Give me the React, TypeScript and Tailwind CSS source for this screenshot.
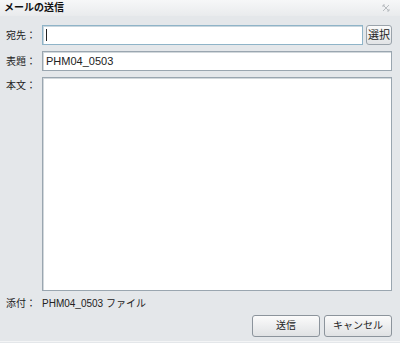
export default function App() {
    const jp = "font-['Tahoma','Liberation_Sans','Noto_Sans_CJK_JP',sans-serif]";
    return (
        <div className={`flex h-[343px] w-[400px] flex-col bg-[#e4e7ea] text-[10px] text-[#222] ${jp}`}>
            {/* title bar */}
            <div className="flex h-[16px] shrink-0 items-center justify-between bg-gradient-to-b from-[#f6f7f8] to-[#e9ebed] pl-[4px] pr-[10px]">
                <span className="text-[10px] font-bold leading-none text-[#111]">メールの送信</span>
                <svg width="8" height="8" viewBox="0 0 8 8" className="text-[#b8bcc0]">
                    <path d="M1 1 L7 7 M7 1 L1 7 M1 1 h2 M1 1 v2 M7 7 h-2 M7 7 v-2" stroke="currentColor" strokeWidth="1" fill="none" />
                </svg>
            </div>

            <div className="flex flex-1 flex-col pl-[6px] pr-[8px] pt-[9px]">
                <div className="flex h-[20px] shrink-0 items-center">
                    <span className="w-[36px] shrink-0">宛先：</span>
                    <div className="flex h-[20px] flex-1 items-center border border-[#8fb4c8] bg-white pl-[3px] shadow-[inset_1px_1px_0_#c9d6de]">
                        <span className="h-[12px] w-px bg-[#222]" />
                    </div>
                    <button className="ml-[3px] h-[20px] w-[26px] shrink-0 rounded-[3px] border border-[#9aa3ab] bg-gradient-to-b from-[#fafafa] to-[#e2e4e6] px-0 text-[11px] leading-none">
                        選択
                    </button>
                </div>

                <div className="mt-[6px] flex h-[20px] shrink-0 items-center">
                    <span className="w-[36px] shrink-0">表題：</span>
                    <div className="flex h-[20px] flex-1 items-center border border-[#9aa6b0] bg-white pl-[3px] text-[11px] shadow-[inset_1px_1px_0_#d2d8dc]">
                        PHM04_0503
                    </div>
                </div>

                <div className="mt-[6px] flex h-[214px] shrink-0">
                    <span className="w-[36px] shrink-0 pt-[1px]">本文：</span>
                    <div className="flex-1 border border-[#9aa6b0] bg-white shadow-[inset_1px_1px_0_#d2d8dc]" />
                </div>

                <div className="mt-[5px] flex h-[14px] shrink-0 items-center">
                    <span className="w-[36px] shrink-0">添付：</span>
                    <span className="text-[10px]">PHM04_0503 ファイル</span>
                </div>

                <div className="mt-[5px] flex shrink-0 justify-end gap-[4px]">
                    <button className="h-[22px] w-[68px] rounded-[3px] border border-[#8c949c] bg-gradient-to-b from-[#fbfbfb] to-[#e0e2e4] text-[10px] leading-none">
                        送信
                    </button>
                    <button className="h-[22px] w-[68px] rounded-[3px] border border-[#8c949c] bg-gradient-to-b from-[#fbfbfb] to-[#e0e2e4] text-[10px] leading-none">
                        キャンセル
                    </button>
                </div>
            </div>
            <div className="h-px shrink-0 bg-[#f4f5f6]" />
            <div className="h-px shrink-0" />
        </div>
    );
}
